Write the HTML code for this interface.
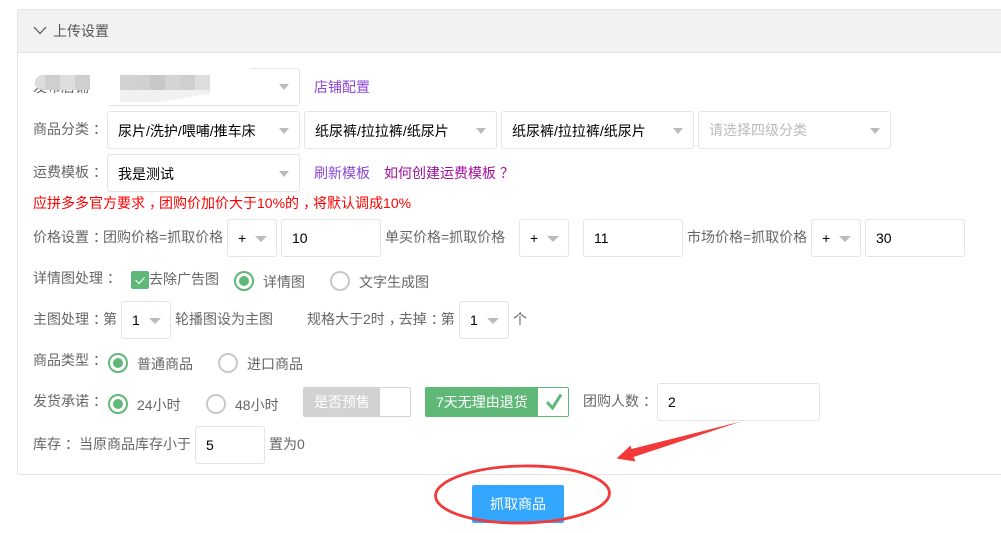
<!DOCTYPE html>
<html lang="zh">
<head>
<meta charset="utf-8">
<style>
html,body{margin:0;padding:0;background:#fff;}
body{width:1001px;height:533px;position:relative;overflow:hidden;font-family:"Liberation Sans","Noto Sans CJK SC",sans-serif;font-size:14px;color:#666;}
.t{position:absolute;line-height:20px;height:20px;white-space:nowrap;}
.b{position:absolute;box-sizing:border-box;border:1px solid #e4e4e4;border-radius:3px;background:#fff;color:#000;}
.b span{position:absolute;left:10px;top:8px;line-height:20px;white-space:nowrap;}
.s i{position:absolute;right:9px;top:16px;width:0;height:0;border-left:6px solid transparent;border-right:6px solid transparent;border-top:6px solid #bbb;}
.w i{right:10px;border-left-width:5.5px;border-right-width:5.5px;}
.w span{top:9px;}
.r{position:absolute;box-sizing:border-box;width:20px;height:20px;border-radius:50%;border:2px solid #c9c9c9;background:#fff;}
.r.on{border-color:#5fb878;}
.r.on::after{content:"";position:absolute;left:3px;top:3px;width:10px;height:10px;border-radius:50%;background:#5fb878;}
.m{position:absolute;height:15px;width:15px;}
a{color:#8a45d8;text-decoration:none;}
u{text-decoration:none;position:relative;left:4px;}
</style>
</head>
<body>
<div style="position:absolute;left:17px;top:9px;width:1000px;height:466px;box-sizing:border-box;border:1px solid #e4e4e4;border-radius:2px;background:#fff;"></div>
<div style="position:absolute;left:18px;top:10px;width:983px;height:42px;background:#f2f2f2;border-bottom:1px solid #e4e4e4;"></div>
<svg style="position:absolute;left:33px;top:24px" width="14" height="12"><path d="M1 3 L7 9.5 L13 3" fill="none" stroke="#555" stroke-width="1.2"/></svg>
<div class="t" style="left:53px;top:21px;color:#555">上传设置</div>

<div class="t" style="left:33px;top:77px">发布店铺</div>
<div class="b s w" style="left:107px;top:68px;width:193px;height:38px"><i style="top:15px"></i></div>
<div style="position:absolute;left:92px;top:66px;width:170px;height:38px;background:#fff;border-radius:0 40px 30px 40px;"></div>
<div style="position:absolute;left:107px;top:95px;width:85px;height:10px;background:#fff;"></div>
<div style="position:absolute;left:35px;top:75px;width:25px;height:15px;background:#dcdcdc;border-radius:8px 0 0 8px;"></div>
<div class="m" style="left:45px;top:75px;background:#cfcfcf"></div>
<div class="m" style="left:60px;top:75px;background:#dcdedc"></div>
<div class="m" style="left:75px;top:75px;background:#cfcfcf"></div>
<div class="m" style="left:120px;top:75px;background:#d2d2d2"></div>
<div class="m" style="left:135px;top:75px;background:#cfd0d0"></div>
<div class="m" style="left:150px;top:75px;background:#c8c8c8"></div>
<div class="m" style="left:165px;top:75px;background:#d4d4d4"></div>
<div class="m" style="left:180px;top:75px;background:#cfcfcf"></div>
<div class="m" style="left:195px;top:75px;background:#dddddd"></div>
<div style="position:absolute;left:120px;top:90px;width:90px;height:12px;background:#f1f1f1;clip-path:polygon(0 0,100% 0,100% 30%,45% 100%,0 100%);"></div>
<a class="t" style="left:314px;top:77px">店铺配置</a>

<div class="t" style="left:33px;top:119px">商品分类<u>：</u></div>
<div class="b s w" style="left:107px;top:111px;width:193px;height:38px"><span>尿片/洗护/喂哺/推车床</span><i></i></div>
<div class="b s w" style="left:304px;top:111px;width:193px;height:38px"><span>纸尿裤/拉拉裤/纸尿片</span><i></i></div>
<div class="b s w" style="left:501px;top:111px;width:193px;height:38px"><span>纸尿裤/拉拉裤/纸尿片</span><i></i></div>
<div class="b s w" style="left:698px;top:111px;width:193px;height:38px;color:#bbb"><span style="top:8px">请选择四级分类</span><i></i></div>

<div class="t" style="left:33px;top:162px">运费模板<u>：</u></div>
<div class="b s w" style="left:107px;top:154px;width:193px;height:38px"><span>我是测试</span><i></i></div>
<a class="t" style="left:314px;top:163px">刷新模板</a>
<div class="t" style="left:384px;top:163px;color:#a0109a">如何创建运费模板<u>？</u></div>

<div class="t" style="left:33px;top:193px;color:#f00">应拼多多官方要求<u>，</u>团购价加价大于10%的<u>，</u>将默认调成10%</div>

<div class="t" style="left:33px;top:227px">价格设置<u>：</u>团购价格=抓取价格</div>
<div class="b s" style="left:227px;top:219px;width:50px;height:38px"><span>+</span><i></i></div>
<div class="b" style="left:281px;top:219px;width:100px;height:38px"><span>10</span></div>
<div class="t" style="left:385px;top:227px">单买价格=抓取价格</div>
<div class="b s" style="left:519px;top:219px;width:50px;height:38px"><span>+</span><i></i></div>
<div class="b" style="left:583px;top:219px;width:100px;height:38px"><span>11</span></div>
<div class="t" style="left:687px;top:227px">市场价格=抓取价格</div>
<div class="b s" style="left:811px;top:219px;width:50px;height:38px"><span>+</span><i></i></div>
<div class="b" style="left:865px;top:219px;width:100px;height:38px"><span>30</span></div>

<div class="t" style="left:33px;top:268px">详情图处理<u>：</u></div>
<div style="position:absolute;left:131px;top:271px;width:18px;height:18px;background:#5fb878;border-radius:2px;"></div>
<svg style="position:absolute;left:131px;top:271px" width="18" height="18"><path d="M4.5 9 L8 12.5 L13.5 6.5" fill="none" stroke="#fff" stroke-width="1"/></svg>
<div class="t" style="left:149px;top:269px">去除广告图</div>
<div class="r on" style="left:234px;top:271px"></div>
<div class="t" style="left:263px;top:272px">详情图</div>
<div class="r" style="left:330px;top:271px"></div>
<div class="t" style="left:359px;top:272px">文字生成图</div>

<div class="t" style="left:33px;top:309px">主图处理<u>：</u>第</div>
<div class="b s" style="left:121px;top:301px;width:50px;height:38px"><span>1</span><i></i></div>
<div class="t" style="left:175px;top:309px">轮播图设为主图</div>
<div class="t" style="left:307px;top:309px">规格大于2时<u>，</u>去掉<u>：</u>第</div>
<div class="b s" style="left:459px;top:301px;width:50px;height:38px"><span>1</span><i></i></div>
<div class="t" style="left:513px;top:309px">个</div>

<div class="t" style="left:33px;top:350px">商品类型<u>：</u></div>
<div class="r on" style="left:108px;top:353px"></div>
<div class="t" style="left:137px;top:354px">普通商品</div>
<div class="r" style="left:218px;top:353px"></div>
<div class="t" style="left:247px;top:354px">进口商品</div>

<div class="t" style="left:33px;top:391px">发货承诺<u>：</u></div>
<div class="r on" style="left:108px;top:394px"></div>
<div class="t" style="left:137px;top:395px">24小时</div>
<div class="r" style="left:206px;top:394px"></div>
<div class="t" style="left:235px;top:395px">48小时</div>
<div style="position:absolute;left:303px;top:387px;width:108px;height:30px;box-sizing:border-box;border:1px solid #d2d2d2;border-radius:2px;background:#fff;"></div>
<div style="position:absolute;left:303px;top:387px;width:77px;height:30px;background:#d2d2d2;border-radius:2px 0 0 2px;"></div>
<div class="t" style="left:314px;top:392px;color:#fff">是否预售</div>
<div style="position:absolute;left:425px;top:387px;width:144px;height:30px;box-sizing:border-box;border:1px solid #5fb878;border-radius:2px;background:#fff;"></div>
<div style="position:absolute;left:425px;top:387px;width:113px;height:30px;background:#5fb878;border-radius:2px 0 0 2px;"></div>
<div class="t" style="left:436px;top:392px;color:#fff">7天无理由退货</div>
<svg style="position:absolute;left:544px;top:391px" width="22" height="22"><path d="M3 11 L8.5 17 L17 3.5" fill="none" stroke="#5fb878" stroke-width="3"/></svg>
<div class="t" style="left:583px;top:391px">团购人数<u>：</u></div>
<div class="b" style="left:657px;top:383px;width:163px;height:38px"><span>2</span></div>

<div class="t" style="left:33px;top:434px">库存<u>：</u></div>
<div class="t" style="left:79px;top:434px">当原商品库存小于</div>
<div class="b" style="left:195px;top:426px;width:70px;height:38px"><span>5</span></div>
<div class="t" style="left:269px;top:434px">置为0</div>

<div style="position:absolute;left:472px;top:485px;width:92px;height:38px;background:#33a6ff;border-radius:2px;color:#fff;text-align:center;line-height:38px;">抓取商品</div>

<svg style="position:absolute;left:0;top:0" width="1001" height="533">
<ellipse cx="522.5" cy="494.5" rx="87" ry="28.5" fill="none" stroke="#f23a3a" stroke-width="2.8" transform="rotate(-1 522.5 494.5)"/>
<polygon points="741,421.5 631.5,449 630.5,445.5 616.5,458.5 635.5,461.5 633.5,457" fill="#f23a3a"/>
</svg>
</body>
</html>
